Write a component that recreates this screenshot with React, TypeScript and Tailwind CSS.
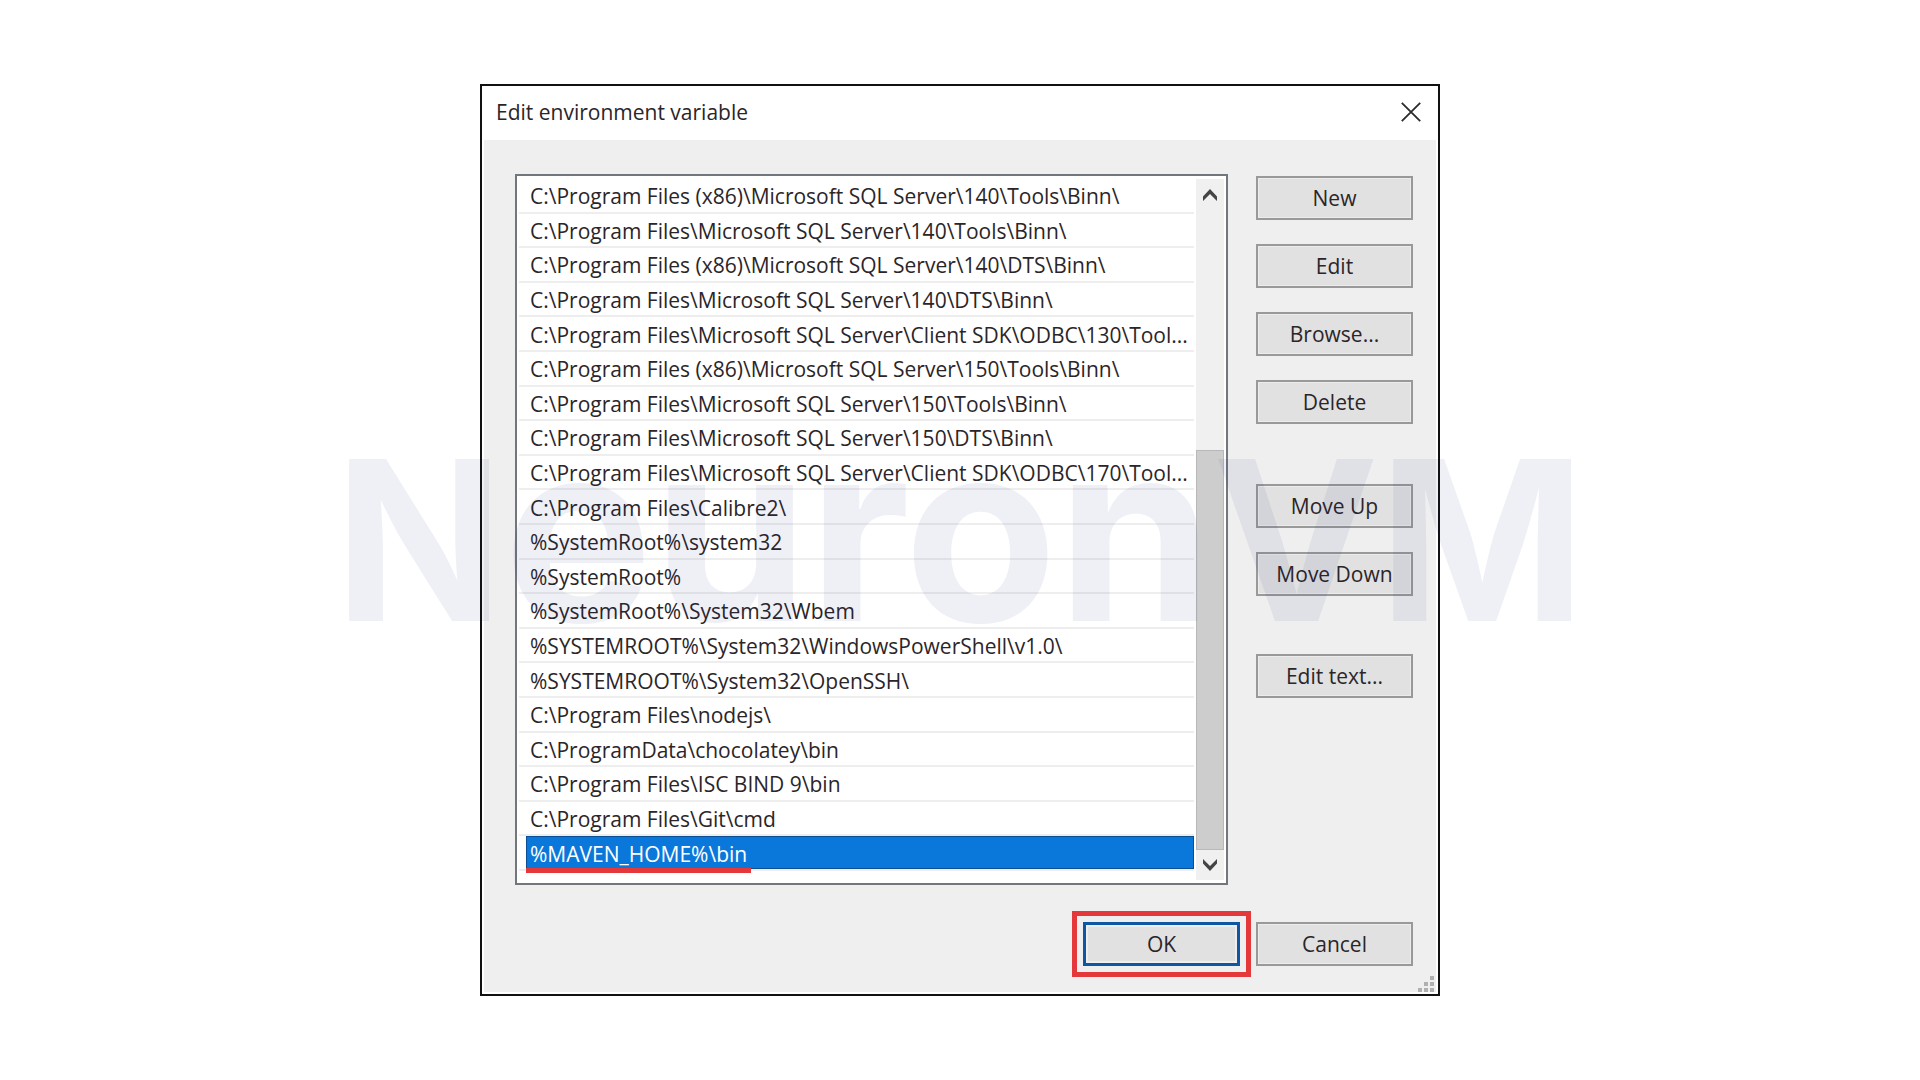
import { clsx } from 'clsx';

const paths = [
  'C:\\Program Files (x86)\\Microsoft SQL Server\\140\\Tools\\Binn\\',
  'C:\\Program Files\\Microsoft SQL Server\\140\\Tools\\Binn\\',
  'C:\\Program Files (x86)\\Microsoft SQL Server\\140\\DTS\\Binn\\',
  'C:\\Program Files\\Microsoft SQL Server\\140\\DTS\\Binn\\',
  'C:\\Program Files\\Microsoft SQL Server\\Client SDK\\ODBC\\130\\Tool...',
  'C:\\Program Files (x86)\\Microsoft SQL Server\\150\\Tools\\Binn\\',
  'C:\\Program Files\\Microsoft SQL Server\\150\\Tools\\Binn\\',
  'C:\\Program Files\\Microsoft SQL Server\\150\\DTS\\Binn\\',
  'C:\\Program Files\\Microsoft SQL Server\\Client SDK\\ODBC\\170\\Tool...',
  'C:\\Program Files\\Calibre2\\',
  '%SystemRoot%\\system32',
  '%SystemRoot%',
  '%SystemRoot%\\System32\\Wbem',
  '%SYSTEMROOT%\\System32\\WindowsPowerShell\\v1.0\\',
  '%SYSTEMROOT%\\System32\\OpenSSH\\',
  'C:\\Program Files\\nodejs\\',
  'C:\\ProgramData\\chocolatey\\bin',
  'C:\\Program Files\\ISC BIND 9\\bin',
  'C:\\Program Files\\Git\\cmd',
  '%MAVEN_HOME%\\bin',
];

const selected = '%MAVEN_HOME%\\bin';

interface DialogButtonProps {
  label: string;
  primary?: boolean;
  className?: string;
}

const DialogButton = ({ label, primary = false, className }: DialogButtonProps) => (
  <button
    type="button"
    className={clsx(
      'flex h-11 w-[157px] shrink-0 items-center justify-center bg-[#e1e1e1]',
      primary
        ? 'border-[3px] border-[#0f57a3] shadow-[inset_0_0_0_2px_#eeeeee]'
        : 'border-2 border-[#999999] shadow-[inset_0_0_0_1px_#ececec]',
      className
    )}
  >
    {label}
  </button>
);

const PathRow = ({ path }: { path: string }) => {
  const isSelected = path === selected;

  return (
    <li
      role="option"
      aria-selected={isSelected}
      className="flex min-h-0 flex-1 border-b-2 border-[#eeeeee] pl-[7px]"
    >
      <span
        className={clsx(
          'flex min-w-0 flex-1 items-center whitespace-nowrap px-1 pt-0.5',
          isSelected && 'border border-[#0a4f94] bg-[#0a78da] px-[3px] text-white'
        )}
      >
        {isSelected ? (
          <span className="relative">
            {path}
            <span className="absolute -inset-x-1 top-full h-[5px] bg-[#e5383b]" />
          </span>
        ) : (
          path
        )}
      </span>
    </li>
  );
};

const ScrollBar = () => (
  <div className="my-[3px] mr-0.5 ml-0.5 flex w-7 shrink-0 flex-col bg-[#f0f0f0]">
    <button type="button" aria-label="Scroll up" className="flex h-8 items-center justify-center">
      <svg width="14" height="12" viewBox="0 0 14 12" fill="#444444">
        <path d="M7 0 L14 7.5 V12 L7 5 L0 12 V7.5 Z" />
      </svg>
    </button>
    <div className="flex flex-1 flex-col justify-end">
      <div className="h-[400px] border border-[#b8b8b8] bg-[#cdcdcd]" />
    </div>
    <button type="button" aria-label="Scroll down" className="flex h-[30px] items-center justify-center">
      <svg width="14" height="12" viewBox="0 0 14 12" fill="#444444">
        <path d="M7 12 L14 4.5 V0 L7 7 L0 0 V4.5 Z" />
      </svg>
    </button>
  </div>
);

const ResizeGrip = () => (
  <svg className="absolute right-0.5 bottom-0" width="16" height="16" viewBox="0 0 16 16" fill="#b0b0b0">
    <path d="M12 0h4v4h-4z M6 6h4v4h-4z M12 6h4v4h-4z M0 12h4v4h-4z M6 12h4v4h-4z M12 12h4v4h-4z" />
  </svg>
);

const Watermark = () => (
  <div
    aria-hidden="true"
    className="pointer-events-none absolute inset-0 flex items-center justify-center pb-5 font-[Inter,sans-serif] text-[222px] leading-none font-bold text-[#1a297e]/7"
  >
    <span className="whitespace-nowrap">
      N<span className="text-[250px]">euron</span>VM
    </span>
  </div>
);

const App = () => {
  return (
    <main className="relative flex min-h-screen items-center justify-center overflow-hidden bg-white font-['Open_Sans','Noto_Sans',sans-serif] text-[21px] leading-7 text-[#2b2529]">
      <div role="dialog" aria-labelledby="dialog-title" className="w-1/2 min-w-[900px] border-2 border-[#111111] bg-white px-0.5 pb-0.5">
        <header className="flex h-[54px] items-center justify-between pr-[15px] pb-0.5 pl-3">
          <h1 id="dialog-title">Edit environment variable</h1>
          <button type="button" aria-label="Close">
            <svg width="20" height="20" viewBox="0 0 20 20" fill="none" stroke="#2b2b2b" strokeWidth="1.8">
              <path d="M0.8 0.8 L19.2 19.2 M19.2 0.8 L0.8 19.2" />
            </svg>
          </button>
        </header>

        <div className="relative bg-[#efefef] pt-[34px] pr-[23px] pb-[26px] pl-[31px]">
          <div className="flex gap-7">
            <div className="flex h-[711px] min-w-0 flex-1 border-2 border-[#72767d] bg-white">
              <ul role="listbox" aria-label="Path entries" className="mt-[3px] mb-3 ml-0.5 flex min-w-0 flex-1 flex-col">
                {paths.map((path) => (
                  <PathRow key={path} path={path} />
                ))}
              </ul>
              <ScrollBar />
            </div>

            <div className="flex flex-col gap-6 pt-0.5">
              <DialogButton label="New" />
              <DialogButton label="Edit" />
              <DialogButton label="Browse..." />
              <DialogButton label="Delete" />
              <DialogButton label="Move Up" className="mt-9" />
              <DialogButton label="Move Down" />
              <DialogButton label="Edit text..." className="mt-[34px]" />
            </div>
          </div>

          <div className="mt-[37px] flex justify-end gap-4">
            <div className="relative">
              <DialogButton label="OK" primary />
              <span className="pointer-events-none absolute -inset-[11px] border-[5px] border-[#e5383b]" />
            </div>
            <DialogButton label="Cancel" />
          </div>

          <ResizeGrip />
        </div>
      </div>

      <Watermark />
    </main>
  );
};

export default App;
